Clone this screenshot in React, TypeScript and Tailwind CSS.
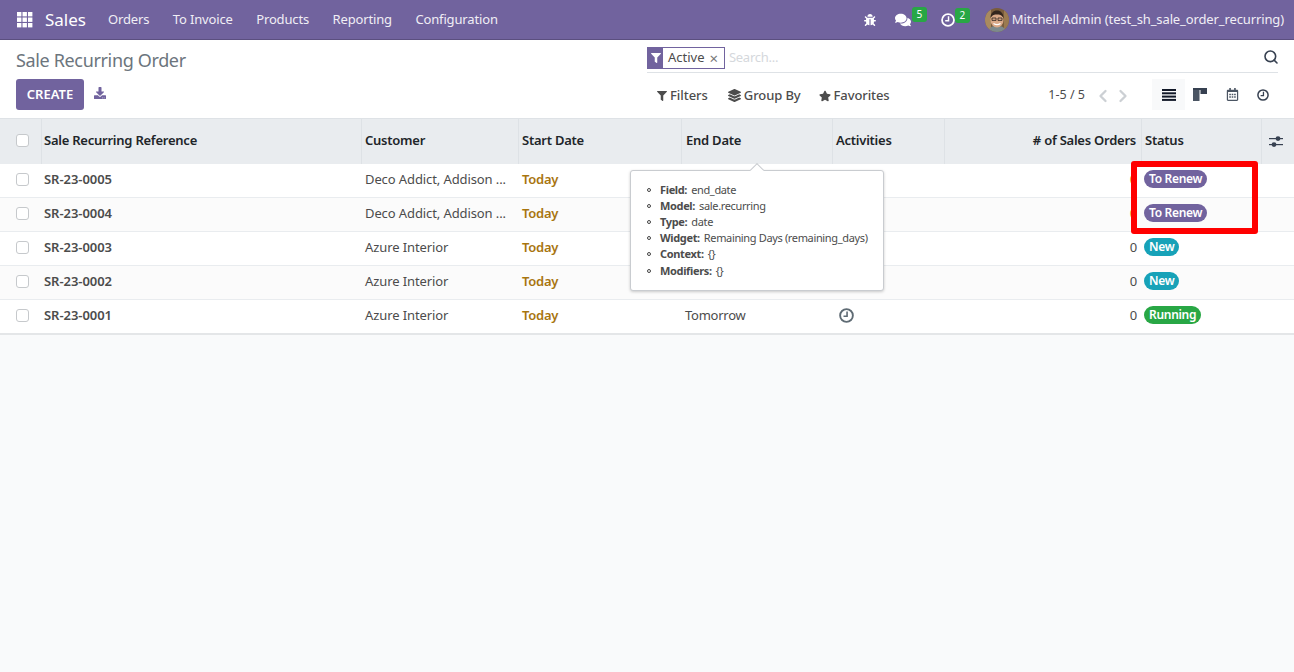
import React from "react";
import { FaBug, FaComments, FaFilter, FaLayerGroup, FaStar, FaDownload, FaRegCalendarAlt } from "react-icons/fa";
import { FiChevronLeft, FiChevronRight, FiSearch } from "react-icons/fi";

const cols = "grid grid-cols-[41px_320px_157px_163px_151px_112px_197px_120px_33px]";

const orders = [
  { ref: "SR-23-0005", customer: "Deco Addict, Addison ...", end: "", status: "To Renew", zebra: false },
  { ref: "SR-23-0004", customer: "Deco Addict, Addison ...", end: "", status: "To Renew", zebra: true },
  { ref: "SR-23-0003", customer: "Azure Interior", end: "", status: "New", zebra: false },
  { ref: "SR-23-0002", customer: "Azure Interior", end: "", status: "New", zebra: true },
  { ref: "SR-23-0001", customer: "Azure Interior", end: "Tomorrow", status: "Running", zebra: false },
];

function AppsIcon() {
  return (
    <svg width="16" height="16" viewBox="0 0 16 16" fill="#fff">
      {[0, 5.5, 11].map((y) =>
        [0, 5.5, 11].map((x) => <rect key={`${x}-${y}`} x={x} y={y} width="4.4" height="4.4" />)
      )}
    </svg>
  );
}

// clock-o, the FA5 regular one has different hands
function ClockIcon({ size }: { size: number }) {
  return (
    <svg width={size} height={size} viewBox="0 0 16 16" fill="none" stroke="currentColor">
      <circle cx="8" cy="8" r="6.8" strokeWidth="2" />
      <path d="M8.6 3.8v5H4.8" strokeWidth="1.7" />
    </svg>
  );
}

function SlidersIcon() {
  return (
    <svg width="14" height="11" viewBox="0 0 14 11" fill="currentColor">
      <rect x="0" y="2" width="14" height="1.2" />
      <rect x="0" y="8" width="14" height="1.2" />
      <circle cx="9" cy="2.6" r="2.4" />
      <circle cx="5" cy="8.6" r="2.4" />
    </svg>
  );
}

function Avatar() {
  return (
    <svg width="24" height="24" viewBox="0 0 24 24" className="rounded-full">
      <rect width="24" height="24" fill="#7a5c3c" />
      <rect x="0" y="0" width="6" height="24" fill="#a98a5f" />
      <rect x="19" y="0" width="5" height="24" fill="#9a7a50" />
      <path d="M3 24c1-5 4-6 9-6s8 1 9 6z" fill="#7d8a8c" />
      <ellipse cx="12" cy="12" rx="6.5" ry="7.5" fill="#d9a988" />
      <path d="M5.5 10c0-5 3-7.5 6.5-7.5s6.5 2.5 6.5 7.5c-2-3-4-3.4-6.5-3.4s-4.5.4-6.5 3.4z" fill="#33261d" />
      <path d="M7 10h4v2.4H7zM13 10h4v2.4h-4z" fill="none" stroke="#2b2420" strokeWidth="0.8" />
      <path d="M8.5 15.5c2.3 1.5 4.7 1.5 7 0" fill="none" stroke="#fff" strokeWidth="1.3" />
    </svg>
  );
}

function ListIcon() {
  return (
    <svg width="14" height="12" viewBox="0 0 14 12" fill="#111827">
      <rect y="0" width="14" height="2" />
      <rect y="3.3" width="14" height="2" />
      <rect y="6.6" width="14" height="2" />
      <rect y="9.9" width="14" height="2" />
    </svg>
  );
}

function KanbanIcon() {
  return (
    <svg width="14" height="13" viewBox="0 0 14 13">
      <rect x="0" y="0" width="14" height="2" fill="#374151" />
      <rect x="0" y="2" width="6.5" height="11" fill="#4b5563" />
      <rect x="7.5" y="2" width="6.5" height="4" fill="#374151" />
    </svg>
  );
}

function Checkbox() {
  return <span className="block w-[13px] h-[13px] rounded-[3px] border border-[#c6c9cc] bg-white" />;
}

function HeadCell({ label, right, className = "pl-[3px]" }: { label: string; right?: boolean; className?: string }) {
  return (
    <div className={`h-full pb-[2px] flex items-center border-l border-[#dee2e6] ${right ? "justify-end pr-[5px]" : className} font-semibold text-[#212529] whitespace-nowrap`}>
      {label}
    </div>
  );
}

function StatusPill({ status }: { status: string }) {
  const bg = status === "To Renew" ? "bg-[#71639e]" : status === "New" ? "bg-[#17a2b8]" : "bg-[#28a745]";
  return (
    <span className={`flex items-center w-fit h-[18px] -mt-[2px] px-[5px] rounded-full text-[12px] tracking-[-0.3px] font-semibold text-white ${bg}`}>
      {status}
    </span>
  );
}

function Tooltip() {
  const items = [
    ["Field:", "end_date"],
    ["Model:", "sale.recurring"],
    ["Type:", "date"],
    ["Widget:", "Remaining Days (remaining_days)"],
    ["Context:", "{}"],
    ["Modifiers:", "{}"],
  ];
  return (
    <div className="absolute left-[630px] top-[170px] w-[254px] h-[121px] bg-white border border-[#c9ccd0] rounded-[3px] shadow-[0_1px_3px_rgba(0,0,0,0.2)] pl-[29px] pt-[11px] text-[11px] tracking-[-0.35px] text-[#4c4c4c]">
      <span className="absolute left-[121px] top-[-6px] w-[10px] h-[10px] rotate-45 bg-white border-l border-t border-[#c9ccd0]" />
      {items.map(([k, v]) => (
        <div key={k} className="relative h-[16px] last:mt-[1px] leading-[16px] whitespace-nowrap">
          <span className="absolute left-[-13px] top-[6px] w-[4px] h-[4px] rounded-full border border-[#444]" />
          <span className="font-bold mr-[4px]">{k}</span>
          {v}
        </div>
      ))}
    </div>
  );
}

export default function App() {
  return (
    <div className="relative w-[1294px] h-[672px] overflow-hidden flex flex-col bg-[#f9fafb] text-[13px] tracking-[-0.24px] text-[#4c4c4c] font-['Noto_Sans',sans-serif]">
      {/* navbar */}
      <div className="h-[40px] shrink-0 flex items-center bg-[#71639e] border-b border-[#5b4f7f] text-white">
        <div className="pl-[17px] w-[45px]"><AppsIcon /></div>
        <span className="text-[17px] tracking-normal w-[63px]">Sales</span>
        <div className="flex gap-[23.5px] pt-[1px] tracking-[-0.15px] text-[#f0eef5]">
          <span>Orders</span>
          <span>To Invoice</span>
          <span>Products</span>
          <span>Reporting</span>
          <span>Configuration</span>
        </div>
        <div className="ml-auto flex items-center pr-[10px]">
          <FaBug className="text-[12px] mr-[19px]" />
          <span className="relative flex mr-[30px]">
            <FaComments className="text-[16px]" />
            <span className="absolute left-[17px] top-[-5px] w-[15px] h-[15px] rounded-[3px] bg-[#28a745] text-[10px] leading-[14px] text-center">5</span>
          </span>
          <span className="relative flex mr-[30px]">
            <ClockIcon size={14} />
            <span className="absolute left-[14px] top-[-5px] w-[15px] h-[15px] rounded-[3px] bg-[#28a745] text-[10px] leading-[14px] text-center">2</span>
          </span>
          <span className="flex mr-[3px]"><Avatar /></span>
          <span className="tracking-[-0.12px] pt-[1px] text-[#f0eef5] whitespace-nowrap">Mitchell Admin (test_sh_sale_order_recurring)</span>
        </div>
      </div>

      {/* control panel */}
      <div className="h-[79px] shrink-0 flex bg-white border-b border-[#dee2e6]">
        <div className="w-[647px] pl-[16px] pt-[7px]">
          <div className="text-[18px] tracking-[-0.35px] leading-[26px] text-[#6c757d]">Sale Recurring Order</div>
          <div className="mt-[6px] flex items-center">
            <button className="h-[31px] w-[68px] rounded-[3px] bg-[#71639e] text-white text-[13px] tracking-normal font-semibold">CREATE</button>
            <FaDownload className="ml-[10px] text-[#71639e] text-[12px] mb-[3px]" />
          </div>
        </div>
        <div className="flex-1 pr-[16px]">
          <div className="mt-[7px] h-[26px] flex items-center border-b border-[#dee2e6] w-[631px]">
            <span className="flex items-center h-[22px] border border-[#71639e] -mt-[3px]">
              <span className="w-[15px] h-full bg-[#71639e] flex items-center justify-center text-white">
                <FaFilter className="text-[10px]" />
              </span>
              <span className="pl-[5px] pr-[5px] tracking-normal text-[#4c4c4c]">Active</span>
              <span className="pr-[6px] text-[#777] text-[15px] leading-none">×</span>
            </span>
            <span className="ml-[4px] -mt-[3px] text-[#d5d8dc]">Search...</span>
            <FiSearch className="ml-auto -mr-[1px] text-[16px] text-[#374151] -mt-[5px]" strokeWidth={2.4} />
          </div>
          <div className="mt-[6px] pt-[2px] flex items-center h-[31px]">
            <span className="ml-[10px] flex items-center gap-[3px] tracking-[-0.05px] font-medium">
              <FaFilter className="text-[10px]" />Filters
            </span>
            <span className="ml-[20px] flex items-center gap-[3px] tracking-[-0.1px] font-medium">
              <FaLayerGroup className="text-[13px]" />Group By
            </span>
            <span className="ml-[18px] flex items-center gap-[3px] tracking-[-0.1px] font-medium">
              <FaStar className="text-[12px]" />Favorites
            </span>
            <span className="ml-auto text-[12.5px] tracking-normal mr-[8px] text-[#4c4c4c]">1-5 / 5</span>
            <FiChevronLeft className="text-[20px] text-[#ccd0d4]" strokeWidth={2.8} />
            <FiChevronRight className="text-[20px] text-[#ccd0d4]" strokeWidth={2.8} />
            <span className="ml-[19px] w-[33px] h-[31px] -mt-[2px] bg-[#f8f9fa] flex items-center justify-center"><ListIcon /></span>
            <span className="w-[30px] -mt-[2px] flex justify-center"><KanbanIcon /></span>
            <span className="w-[34px] -mt-[2px] flex justify-center"><FaRegCalendarAlt className="text-[13px] text-[#4b5563]" /></span>
            <span className="w-[27px] mr-[2px] -mt-[2px] flex justify-center text-[#374151]"><ClockIcon size={12} /></span>
          </div>
        </div>
      </div>

      {/* list header */}
      <div className={`${cols} h-[45px] shrink-0 items-center bg-[#e9ecef]`}>
        <div className="pl-[16px] pb-[2px]"><Checkbox /></div>
        <HeadCell label="Sale Recurring Reference" className="pl-[2px]" />
        <HeadCell label="Customer" />
        <HeadCell label="Start Date" />
        <HeadCell label="End Date" className="pl-[4px]" />
        <HeadCell label="Activities" />
        <HeadCell label="# of Sales Orders" right />
        <HeadCell label="Status" />
        <div className="h-full pr-[5px] pb-[1px] flex items-center justify-center border-l border-[#dee2e6] text-[#374151]">
          <SlidersIcon />
        </div>
      </div>

      {/* list rows */}
      <div className="border-b-2 border-[#e4e6e8]">
        {orders.map((o) => (
          <div key={o.ref} className={`${cols} h-[34px] last:h-[33px] pb-[2px] items-center border-b border-[#e9ecef] last:border-b-0 ${o.zebra ? "bg-[#fbfbfb]" : "bg-white"}`}>
            <div className="pl-[16px]"><Checkbox /></div>
            <div className="pl-[3px] tracking-[-0.05px] font-semibold text-[#4c4c4c]">{o.ref}</div>
            <div className="pl-[4px] tracking-[-0.1px] whitespace-nowrap">{o.customer}</div>
            <div className="pl-[4px] font-semibold text-[#a8750f]">Today</div>
            <div className="pl-[4px]">{o.end}</div>
            <div className="pl-[7px] text-[#5f6b74]">{o.end && <ClockIcon size={15} />}</div>
            <div className={`pr-[4px] text-right ${o.status === "To Renew" ? "text-[#d9822b]" : ""}`}>0</div>
            <div className="pl-[3px]"><StatusPill status={o.status} /></div>
            <div />
          </div>
        ))}
      </div>

      <Tooltip />

      {/* red annotation box */}
      <div className="absolute left-[1131px] top-[161px] w-[127px] h-[73px] border-[6px] border-[#ff0000] rounded-[3px]" />
    </div>
  );
}
